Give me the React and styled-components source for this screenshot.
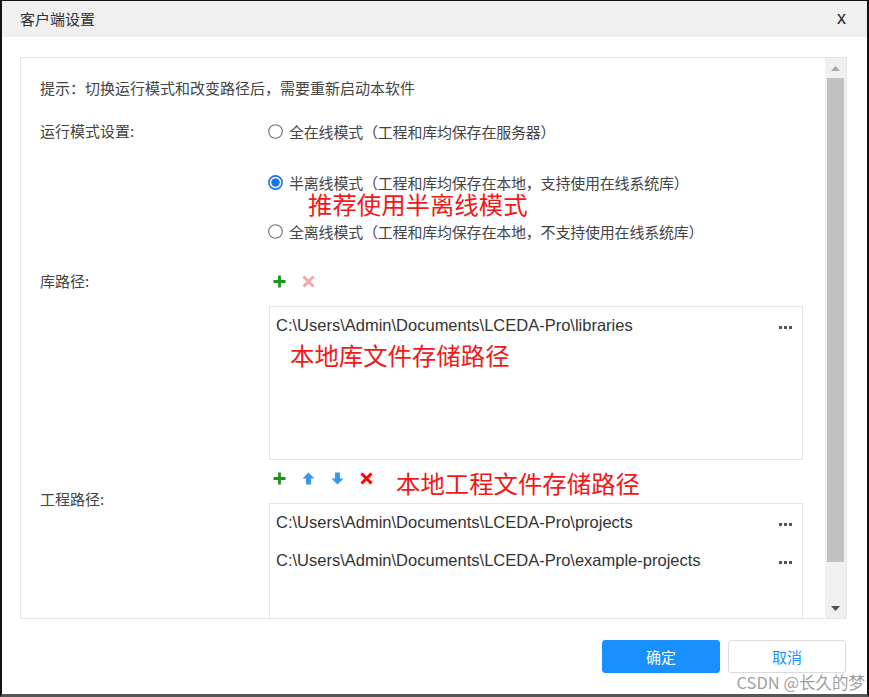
import React from "react";
import styled, { createGlobalStyle } from "styled-components";

const Global = createGlobalStyle`
  html, body { margin: 0; padding: 0; background: #fff; }
  * { box-sizing: border-box; }
`;

const CJK = `"Noto Sans CJK SC", "Noto Sans", sans-serif`;
const LATIN = `"Liberation Sans", Arial, sans-serif`;

const Dialog = styled.div`
  position: relative;
  width: 869px;
  height: 697px;
  border-style: solid;
  border-color: #111;
  border-width: 1px 2px 3px 2px;
  border-bottom-color: #555;
  display: flex;
  flex-direction: column;
  font-family: ${CJK};
  background: #fff;
  overflow: hidden;
`;

const TitleBar = styled.div`
  height: 36px;
  flex: 0 0 36px;
  background: #f0f0f0;
  display: flex;
  align-items: center;
  justify-content: space-between;
  padding: 0 21px 0 18px;
`;

const Title = styled.div`
  font-size: 15px;
  color: #333;
  line-height: 20px;
`;

const Close = styled.div`
  font-family: ${LATIN};
  font-size: 18px;
  color: #222;
  line-height: 20px;
  padding-bottom: 2px;
`;

const Content = styled.div`
  flex: 1;
  padding: 20px 20px 0 18px;
  display: flex;
  flex-direction: column;
`;

const Panel = styled.div`
  height: 562px;
  border: 1px solid #e6e6e6;
  display: flex;
  overflow: hidden;
`;

const Main = styled.div`
  flex: 1;
  padding: 20px 22px 0 19px;
  overflow: hidden;
`;

const Hint = styled.div`
  font-size: 15px;
  line-height: 20px;
  color: #444;
`;

const Section = styled.div`
  display: grid;
  grid-template-columns: 229px 1fr;
  margin-top: ${(p) => p.$top}px;
`;

const Label = styled.div`
  font-size: 15px;
  line-height: 20px;
  color: #444;
  padding-top: ${(p) => p.$pad || 0}px;
`;

const RadioGroup = styled.div`
  display: flex;
  flex-direction: column;
`;

const Option = styled.label`
  display: flex;
  align-items: center;
  gap: 6px;
  height: 20px;
  font-size: 15px;
  color: #444;
  margin-top: ${(p) => p.$top || 0}px;
  margin-left: -1px;
  letter-spacing: -0.2px;
`;

const RedNote = styled.div`
  font-size: 24.4px;
  line-height: 24px;
  height: 24px;
  color: #f01818;
  white-space: nowrap;
  margin-left: ${(p) => p.$left || 0}px;
  margin-top: ${(p) => p.$top || 0}px;
`;

const Toolbar = styled.div`
  display: flex;
  align-items: center;
  height: 20px;
  gap: 16px;
  padding-left: 4px;
  overflow: visible;
`;

const ToolIcon = styled.svg`
  width: 13px;
  height: 13px;
  flex: 0 0 13px;
`;

const PathBox = styled.div`
  margin-top: 15px;
  height: 154px;
  border: 1px solid #e6e6e6;
  display: flex;
  flex-direction: column;
`;

const PathItem = styled.div`
  display: flex;
  align-items: center;
  justify-content: space-between;
  padding: 8px 10px 10px 6px;
  line-height: 20px;
  font-family: ${LATIN};
  font-size: 16.5px;
  color: #333;
`;

const Dots = styled.span`
  display: flex;
  gap: 2px;
  margin-top: 4px;
  span {
    width: 3px;
    height: 3px;
    background: #555;
  }
`;

const Scrollbar = styled.div`
  width: 21px;
  flex: 0 0 21px;
  background: #f0f0f0;
  display: flex;
  flex-direction: column;
  align-items: center;
  padding-right: 1px;
`;

const ArrowBtn = styled.div`
  height: 20px;
  width: 100%;
  display: flex;
  align-items: center;
  justify-content: center;
`;

const Thumb = styled.div`
  width: 17px;
  height: 484px;
  background: #c1c1c1;
`;

const Spacer = styled.div`
  flex: 1;
`;

const Footer = styled.div`
  display: flex;
  justify-content: flex-end;
  gap: 8px;
  margin-top: 21px;
  padding-right: 1px;
`;

const Button = styled.button`
  width: 118px;
  height: 33px;
  border-radius: 3px;
  font-family: ${CJK};
  font-size: 15px;
  cursor: pointer;
  border: 1px solid ${(p) => (p.$primary ? "#1890ff" : "#dcdcdc")};
  background: ${(p) => (p.$primary ? "#1890ff" : "#fff")};
  color: ${(p) => (p.$primary ? "#fff" : "#1890ff")};
`;

const Watermark = styled.div`
  position: absolute;
  right: 2px;
  bottom: 2px;
  font-family: ${CJK};
  font-size: 16.5px;
  line-height: 20px;
  color: rgba(140, 140, 140, 0.85);
  white-space: nowrap;
`;

const Radio = ({ checked }) =>
  checked ? (
    <svg width="15" height="15" viewBox="0 0 15 15">
      <circle cx="7.5" cy="7.5" r="6.6" fill="#fff" stroke="#1a73e8" strokeWidth="1.6" />
      <circle cx="7.5" cy="7.5" r="4.2" fill="#1a73e8" />
    </svg>
  ) : (
    <svg width="15" height="15" viewBox="0 0 15 15">
      <circle cx="7.5" cy="7.5" r="6.8" fill="#fff" stroke="#6f6f6f" strokeWidth="1.1" />
    </svg>
  );

const Plus = () => (
  <ToolIcon viewBox="0 0 13 13">
    <path d="M6.5 0.5 V12.5 M0.5 6.5 H12.5" stroke="#1c961c" strokeWidth="2.8" />
  </ToolIcon>
);

const Cross = ({ color }) => (
  <ToolIcon viewBox="0 0 13 13">
    <path d="M1.5 1.5 L11.5 11.5 M11.5 1.5 L1.5 11.5" stroke={color} strokeWidth="3" />
  </ToolIcon>
);

const Arrow = ({ down }) => (
  <ToolIcon viewBox="0 0 13 13" style={down ? { transform: "rotate(180deg)" } : undefined}>
    <path d="M6.5 0.5 L12.5 6.5 H9 V12.5 H4 V6.5 H0.5 Z" fill="#3b96ee" />
  </ToolIcon>
);

const More = () => (
  <Dots>
    <span />
    <span />
    <span />
  </Dots>
);

export default function App() {
  return (
    <>
      <Global />
      <Dialog>
        <TitleBar>
          <Title>客户端设置</Title>
          <Close>x</Close>
        </TitleBar>
        <Content>
          <Panel>
            <Main>
              <Hint>提示：切换运行模式和改变路径后，需要重新启动本软件</Hint>
              <Section $top={23}>
                <Label>运行模式设置:</Label>
                <RadioGroup>
                  <Option>
                    <Radio />
                    全在线模式（工程和库均保存在服务器）
                  </Option>
                  <Option $top={31}>
                    <Radio checked />
                    半离线模式（工程和库均保存在本地，支持使用在线系统库）
                  </Option>
                  <RedNote $left={39}>推荐使用半离线模式</RedNote>
                  <Option $top={5}>
                    <Radio />
                    全离线模式（工程和库均保存在本地，不支持使用在线系统库）
                  </Option>
                </RadioGroup>
              </Section>
              <Section $top={30}>
                <Label>库路径:</Label>
                <div>
                  <Toolbar>
                    <Plus />
                    <Cross color="#f6a6a6" />
                  </Toolbar>
                  <PathBox>
                    <PathItem>
                      C:\Users\Admin\Documents\LCEDA-Pro\libraries
                      <More />
                    </PathItem>
                    <RedNote $left={20} $top={-2}>
                      本地库文件存储路径
                    </RedNote>
                  </PathBox>
                </div>
              </Section>
              <Section $top={8}>
                <Label $pad={21}>工程路径:</Label>
                <div>
                  <Toolbar>
                    <Plus />
                    <Arrow />
                    <Arrow down />
                    <Cross color="#f00" />
                    <RedNote $left={7} $top={10}>
                      本地工程文件存储路径
                    </RedNote>
                  </Toolbar>
                  <PathBox>
                    <PathItem>
                      C:\Users\Admin\Documents\LCEDA-Pro\projects
                      <More />
                    </PathItem>
                    <PathItem>
                      C:\Users\Admin\Documents\LCEDA-Pro\example-projects
                      <More />
                    </PathItem>
                  </PathBox>
                </div>
              </Section>
            </Main>
            <Scrollbar>
              <ArrowBtn>
                <svg width="9" height="5" viewBox="0 0 9 5">
                  <path d="M0 5 L4.5 0 L9 5 Z" fill="#a8a8a8" />
                </svg>
              </ArrowBtn>
              <Thumb />
              <Spacer />
              <ArrowBtn>
                <svg width="9" height="5" viewBox="0 0 9 5">
                  <path d="M0 0 L4.5 5 L9 0 Z" fill="#505050" />
                </svg>
              </ArrowBtn>
            </Scrollbar>
          </Panel>
          <Footer>
            <Button $primary>确定</Button>
            <Button>取消</Button>
          </Footer>
        </Content>
        <Watermark>CSDN @长久的梦</Watermark>
      </Dialog>
    </>
  );
}
